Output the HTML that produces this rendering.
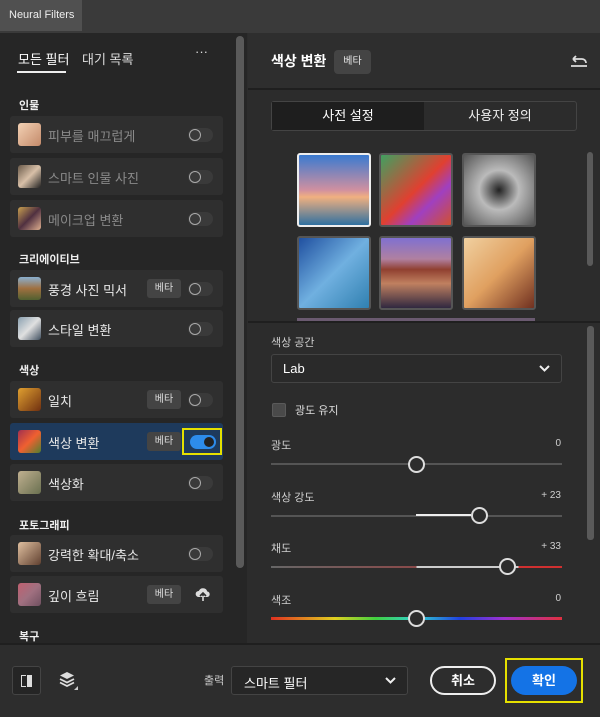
<!DOCTYPE html><html><head><meta charset="utf-8"><style>
*{box-sizing:border-box;margin:0;padding:0}
body{width:600px;height:717px;background:#2c2c2c;font-family:"Liberation Sans","Noto Sans CJK KR",sans-serif;color:#e6e6e6;position:relative;overflow:hidden;font-size:13px}
.a{position:absolute}
.item{position:absolute;left:10px;width:213px;height:37px;background:#2f2f2f;border-radius:3px}
.item .ic{position:absolute;left:8px;top:7px;width:23px;height:23px;border-radius:3px}
.item .t{position:absolute;left:38px;top:10px;font-size:13px;color:#e8e8e8}
.item.dim .t{color:#8a8a8a}
.tog{position:absolute;right:10px;top:12px;width:25px;height:14px;border-radius:7px;background:#3a3a3a}
.tog:before{content:"";position:absolute;left:1px;top:1px;width:12px;height:12px;border-radius:50%;border:1.5px solid #aaa;box-sizing:border-box}
.beta{position:absolute;right:42px;top:9px;width:34px;height:19px;background:#444;border-radius:3px;font-size:10px;text-align:center;line-height:19px;color:#ddd}
.sec{position:absolute;left:19px;font-size:11px;font-weight:bold;color:#eee}
.lbl{position:absolute;left:271px;font-size:11px;color:#cfcfcf}
.val{position:absolute;right:39px;font-size:10px;color:#cfcfcf}
.tr{position:absolute;left:271px;width:291px;height:2px;background:#555}
.th{position:absolute;width:17px;height:17px;border-radius:50%;border:2px solid #ddd;background:#2c2c2c}
.thumb{position:absolute;width:74px;height:74px;border-radius:3px;border:2px solid #555}
.chev{position:absolute;right:11px;top:10px}
</style></head><body>
<div class="a" style="left:0;top:0;width:600px;height:33px;background:#3a3a3a"></div>
<div class="a" style="left:0;top:0;width:82px;height:31px;background:#505050;font-size:11px;color:#eee;padding:9px 0 0 9px">Neural Filters</div>
<div class="a" style="left:0;top:33px;width:247px;height:610px;background:#262626"></div>
<div class="a" style="left:236px;top:36px;width:8px;height:532px;background:#5a5a5a;border-radius:4px"></div>
<div class="a" style="left:18px;top:49px;font-size:13px;color:#fff">모든 필터</div>
<div class="a" style="left:17px;top:71px;width:49px;height:2px;background:#eee"></div>
<div class="a" style="left:82px;top:49px;font-size:13px;color:#ddd">대기 목록</div>
<div class="a" style="left:195px;top:44px;font-size:13px;color:#ddd">···</div>
<div class="sec" style="top:97px">인물</div>
<div class="item dim" style="top:116px"><div class="ic" style="background:linear-gradient(135deg,#f3d2b5,#c48a6a)"></div><div class="t">피부를 매끄럽게</div><div class="tog"></div></div>
<div class="item dim" style="top:158px"><div class="ic" style="background:linear-gradient(135deg,#6a5a4a,#d8c0a8,#222)"></div><div class="t">스마트 인물 사진</div><div class="tog"></div></div>
<div class="item dim" style="top:200px"><div class="ic" style="background:linear-gradient(135deg,#c8a050,#503040,#e0b090)"></div><div class="t">메이크업 변환</div><div class="tog"></div></div>
<div class="sec" style="top:251px">크리에이티브</div>
<div class="item" style="top:270px"><div class="ic" style="background:linear-gradient(180deg,#8ab0d0,#a07040,#506030)"></div><div class="t">풍경 사진 믹서</div><div class="beta">베타</div><div class="tog"></div></div>
<div class="item" style="top:310px"><div class="ic" style="background:linear-gradient(135deg,#8aa0b0,#e0e0e0,#405060)"></div><div class="t">스타일 변환</div><div class="tog"></div></div>
<div class="sec" style="top:362px">색상</div>
<div class="item" style="top:381px"><div class="ic" style="background:linear-gradient(135deg,#e0a030,#703010)"></div><div class="t">일치</div><div class="beta">베타</div><div class="tog"></div></div>
<div class="item" style="top:423px;background:#1e3a5c"><div class="ic" style="background:linear-gradient(135deg,#a03050,#f06030,#508030)"></div><div class="t">색상 변환</div><div class="beta">베타</div>
<div class="a" style="left:172px;top:5px;width:40px;height:27px;border:2px solid #e5e000"></div>
<div class="a" style="left:180px;top:12px;width:26px;height:14px;border-radius:7px;background:#2d8ceb"><div class="a" style="left:14px;top:2px;width:10px;height:10px;border-radius:50%;background:#222"></div></div></div>
<div class="item" style="top:464px"><div class="ic" style="background:linear-gradient(135deg,#c0b090,#6a7050)"></div><div class="t">색상화</div><div class="tog"></div></div>
<div class="sec" style="top:517px">포토그래피</div>
<div class="item" style="top:535px"><div class="ic" style="background:linear-gradient(135deg,#e0c0a0,#604030)"></div><div class="t">강력한 확대/축소</div><div class="tog"></div></div>
<div class="item" style="top:576px"><div class="ic" style="background:linear-gradient(135deg,#c06070,#a07080,#705060)"></div><div class="t">깊이 흐림</div><div class="beta">베타</div>
<svg class="a" style="right:12px;top:11px" width="16" height="15" viewBox="0 0 16 15"><path d="M4 10H3.5A3 3 0 0 1 3.8 4 4.5 4.5 0 0 1 12.3 4.5 2.8 2.8 0 0 1 12.5 10H12Z" fill="#ddd"/><path d="M8 6V14M5 9L8 6 11 9" stroke="#2f2f2f" stroke-width="1.6" fill="none"/><path d="M8 9V14" stroke="#ddd" stroke-width="1.6"/></svg></div>
<div class="sec" style="top:628px">복구</div>
<div class="a" style="left:248px;top:33px;width:352px;height:55px;background:#2e2e2e"></div>
<div class="a" style="left:248px;top:88px;width:352px;height:2px;background:#1f1f1f"></div>
<div class="a" style="left:271px;top:51px;font-size:14px;font-weight:bold;color:#fff">색상 변환</div>
<div class="a" style="left:334px;top:50px;width:37px;height:24px;background:#444;border-radius:4px;font-size:10px;text-align:center;line-height:24px">베타</div>
<svg class="a" style="left:570px;top:54px" width="18" height="14" viewBox="0 0 18 14"><path d="M1 12H17M3 5H12A4 4 0 0 1 16 9M3 5L6 2M3 5L6 8" stroke="#ddd" stroke-width="1.8" fill="none"/></svg>
<div class="a" style="left:271px;top:101px;width:306px;height:30px;border:1px solid #444;border-radius:3px;background:#2c2c2c"></div>
<div class="a" style="left:272px;top:102px;width:152px;height:28px;background:#1e1e1e;text-align:center;line-height:28px;font-size:13px;color:#fff">사전 설정</div>
<div class="a" style="left:424px;top:102px;width:152px;height:28px;text-align:center;line-height:28px;font-size:13px;color:#eee">사용자 정의</div>
<div class="thumb" style="left:297px;top:153px;border-color:#eee;background:linear-gradient(180deg,#3a7ad0,#d090a0 50%,#f0b080 60%,#3070a0)"></div>
<div class="thumb" style="left:379px;top:153px;background:linear-gradient(135deg,#40a060,#e04030 50%,#a040c0 70%,#d05030)"></div>
<div class="thumb" style="left:462px;top:153px;background:radial-gradient(#222,#bbb 40%,#555)"></div>
<div class="thumb" style="left:297px;top:236px;background:linear-gradient(135deg,#2050a0,#70b0e0,#3080b0)"></div>
<div class="thumb" style="left:379px;top:236px;background:linear-gradient(180deg,#8070d0,#b080a0 30%,#904030 45%,#c08060 65%,#302840)"></div>
<div class="thumb" style="left:462px;top:236px;background:linear-gradient(135deg,#f0d0a0,#e0a060,#703020)"></div>
<div class="a" style="left:297px;top:318px;width:238px;height:3px;background:#6a5a70"></div>
<div class="a" style="left:587px;top:152px;width:6px;height:114px;background:#5a5a5a;border-radius:3px"></div>
<div class="a" style="left:248px;top:321px;width:352px;height:2px;background:#1f1f1f"></div>
<div class="a" style="left:587px;top:326px;width:7px;height:214px;background:#5a5a5a;border-radius:3px"></div>
<div class="lbl" style="top:334px">색상 공간</div>
<div class="a" style="left:271px;top:354px;width:291px;height:29px;border:1px solid #444;border-radius:3px;background:#2a2a2a;font-size:13px;color:#fff;padding:6px 0 0 11px">Lab<svg class="chev" width="11" height="7" viewBox="0 0 11 7"><path d="M1 1L5.5 5.5 10 1" stroke="#eee" stroke-width="2" fill="none"/></svg></div>
<div class="a" style="left:272px;top:403px;width:14px;height:14px;background:#4a4a4a;border:1px solid #5a5a5a;border-radius:2px"></div>
<div class="a" style="left:295px;top:402px;font-size:11px;color:#ddd">광도 유지</div>
<div class="lbl" style="top:437px">광도</div><div class="val" style="top:438px">0</div>
<div class="tr" style="top:463px"></div><div class="th" style="left:408px;top:456px"></div>
<div class="lbl" style="top:489px">색상 강도</div><div class="val" style="top:490px">+ 23</div>
<div class="tr" style="top:515px"></div><div class="a" style="left:416px;top:514px;width:55px;height:2px;background:#eee"></div><div class="th" style="left:471px;top:507px"></div>
<div class="lbl" style="top:540px">채도</div><div class="val" style="top:541px">+ 33</div>
<div class="tr" style="top:566px;background:linear-gradient(90deg,#666,#8a4a4a 50%,#ccc 50%,#ccc 85%,#d03030 85%)"></div><div class="th" style="left:499px;top:558px"></div>
<div class="lbl" style="top:592px">색조</div><div class="val" style="top:593px">0</div>
<div class="tr" style="top:617px;height:3px;background:linear-gradient(90deg,#e03020,#e0d020 22%,#40d040 36%,#30d0d0 50%,#2040e0 65%,#a030d0 80%,#e03040)"></div><div class="th" style="left:408px;top:610px;background:#2c2c2c"></div>
<div class="a" style="left:0;top:643px;width:600px;height:2px;background:#1f1f1f"></div>
<div class="a" style="left:0;top:645px;width:600px;height:72px;background:#2d2d2d"></div>
<div class="a" style="left:12px;top:666px;width:29px;height:29px;border:1px solid #444;border-radius:3px;background:#252525"><div class="a" style="left:8px;top:8px;width:5px;height:12px;border:1.5px solid #ddd;border-right:none"></div><div class="a" style="left:14px;top:8px;width:5px;height:12px;background:#ddd"></div></div>
<svg class="a" style="left:59px;top:671px" width="20" height="20" viewBox="0 0 20 20"><path d="M8 1L15 4.5 8 8 1 4.5Z" fill="#ddd"/><path d="M1 8L8 11.5 15 8M1 11.5L8 15 15 11.5" stroke="#ddd" stroke-width="1.8" fill="none"/><path d="M19 15V19H15Z" fill="#ccc"/></svg>
<div class="a" style="left:204px;top:672px;font-size:11px;color:#ccc">출력</div>
<div class="a" style="left:231px;top:666px;width:177px;height:29px;border:1px solid #444;border-radius:3px;background:#262626;font-size:13px;color:#fff;padding:6px 0 0 12px">스마트 필터<svg class="chev" width="11" height="7" viewBox="0 0 11 7"><path d="M1 1L5.5 5.5 10 1" stroke="#eee" stroke-width="2" fill="none"/></svg></div>
<div class="a" style="left:430px;top:666px;width:66px;height:29px;border:2px solid #eee;border-radius:15px;text-align:center;line-height:25px;font-size:13px;font-weight:bold;color:#fff">취소</div>
<div class="a" style="left:505px;top:658px;width:78px;height:45px;border:2px solid #e5e000"></div>
<div class="a" style="left:511px;top:666px;width:66px;height:29px;background:#1473e6;border-radius:15px;text-align:center;line-height:29px;font-size:13px;font-weight:bold;color:#fff">확인</div>
</body></html>
